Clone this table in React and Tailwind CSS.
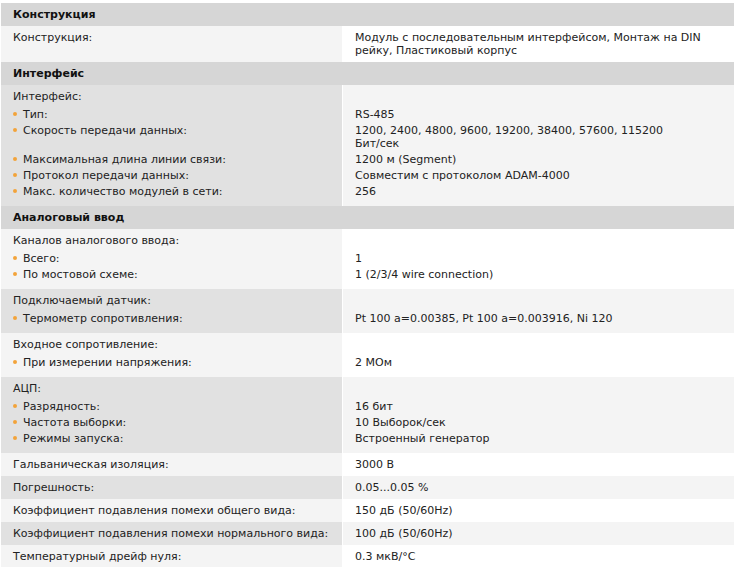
const rows = [
  { type: 'head', title: 'Конструкция' },
  { type: 'row', label: 'Конструкция:', value: ['Модуль с последовательным интерфейсом, Монтаж на DIN', 'рейку, Пластиковый корпус'] },
  { type: 'head', title: 'Интерфейс' },
  {
    type: 'group',
    label: 'Интерфейс:',
    items: [
      ['Тип:', ['RS-485']],
      ['Скорость передачи данных:', ['1200, 2400, 4800, 9600, 19200, 38400, 57600, 115200', 'Бит/сек']],
      ['Максимальная длина линии связи:', ['1200 м (Segment)']],
      ['Протокол передачи данных:', ['Совместим с протоколом ADAM-4000']],
      ['Макс. количество модулей в сети:', ['256']],
    ],
  },
  { type: 'head', title: 'Аналоговый ввод' },
  {
    type: 'group',
    label: 'Каналов аналогового ввода:',
    items: [
      ['Всего:', ['1']],
      ['По мостовой схеме:', ['1 (2/3/4 wire connection)']],
    ],
  },
  {
    type: 'group',
    label: 'Подключаемый датчик:',
    items: [['Термометр сопротивления:', ['Pt 100 a=0.00385, Pt 100 a=0.003916, Ni 120']]],
  },
  {
    type: 'group',
    label: 'Входное сопротивление:',
    items: [['При измерении напряжения:', ['2 МОм']]],
  },
  {
    type: 'group',
    label: 'АЦП:',
    items: [
      ['Разрядность:', ['16 бит']],
      ['Частота выборки:', ['10 Выборок/сек']],
      ['Режимы запуска:', ['Встроенный генератор']],
    ],
  },
  { type: 'row', label: 'Гальваническая изоляция:', value: ['3000 В'] },
  { type: 'row', label: 'Погрешность:', value: ['0.05...0.05 %'] },
  { type: 'row', label: 'Коэффициент подавления помехи общего вида:', value: ['150 дБ (50/60Hz)'] },
  { type: 'row', label: 'Коэффициент подавления помехи нормального вида:', value: ['100 дБ (50/60Hz)'] },
  { type: 'row', label: 'Температурный дрейф нуля:', value: ['0.3 мкВ/°C'] },
]

function Lines({ lines }) {
  return lines.map((l, i) => <div key={i}>{l}</div>)
}

function Bullet() {
  return <span className="inline-block w-[4px] h-[4px] rounded-full bg-[#f2a33a] mr-[6px] mb-[2px] align-middle" />
}

export default function App() {
  let stripe = 0
  const cells = []

  rows.forEach((r, idx) => {
    if (r.type === 'head') {
      cells.push(
        <div key={idx} className="col-span-2 bg-[#d6d6d6] px-[12px] py-[5px] font-bold text-[#111]">
          {r.title}
        </div>
      )
      return
    }
    const gray = stripe % 2 === 1
    stripe++
    const left = gray ? 'bg-[#e1e1e1]' : 'bg-[#f4f4f4]'
    const right = gray ? 'bg-[#f4f4f4]' : 'bg-white'

    if (r.type === 'row') {
      cells.push(
        <div key={idx + 'l'} className={`${left} px-[12px] py-[5px]`}>{r.label}</div>,
        <div key={idx + 'r'} className={`${right} px-[12px] py-[5px]`}><Lines lines={r.value} /></div>
      )
      return
    }

    // group: label line, then bullet items
    cells.push(
      <div key={idx + 'gl'} className={`${left} px-[12px] pt-[5px] pb-[4.5px]`}>{r.label}</div>,
      <div key={idx + 'gr'} className={`${right} px-[12px] pt-[5px] pb-[4.5px]`}>&nbsp;</div>
    )
    r.items.forEach(([label, value], i) => {
      const last = i === r.items.length - 1
      const pad = last ? 'pb-[8.5px]' : 'pb-[3px]'
      cells.push(
        <div key={idx + 'il' + i} className={`${left} px-[12px] ${pad}`}>
          <Bullet />
          {label}
        </div>,
        <div key={idx + 'ir' + i} className={`${right} px-[12px] ${pad}`}>
          <Lines lines={value} />
        </div>
      )
    })
  })

  return (
    <div className="min-h-screen bg-white pt-[3px] px-[1px] font-['DejaVu_Sans',Verdana,sans-serif] text-[11px] leading-[13px] text-[#222]">
      <div className="grid grid-cols-[341px_1fr] gap-x-[1px]">{cells}</div>
    </div>
  )
}
